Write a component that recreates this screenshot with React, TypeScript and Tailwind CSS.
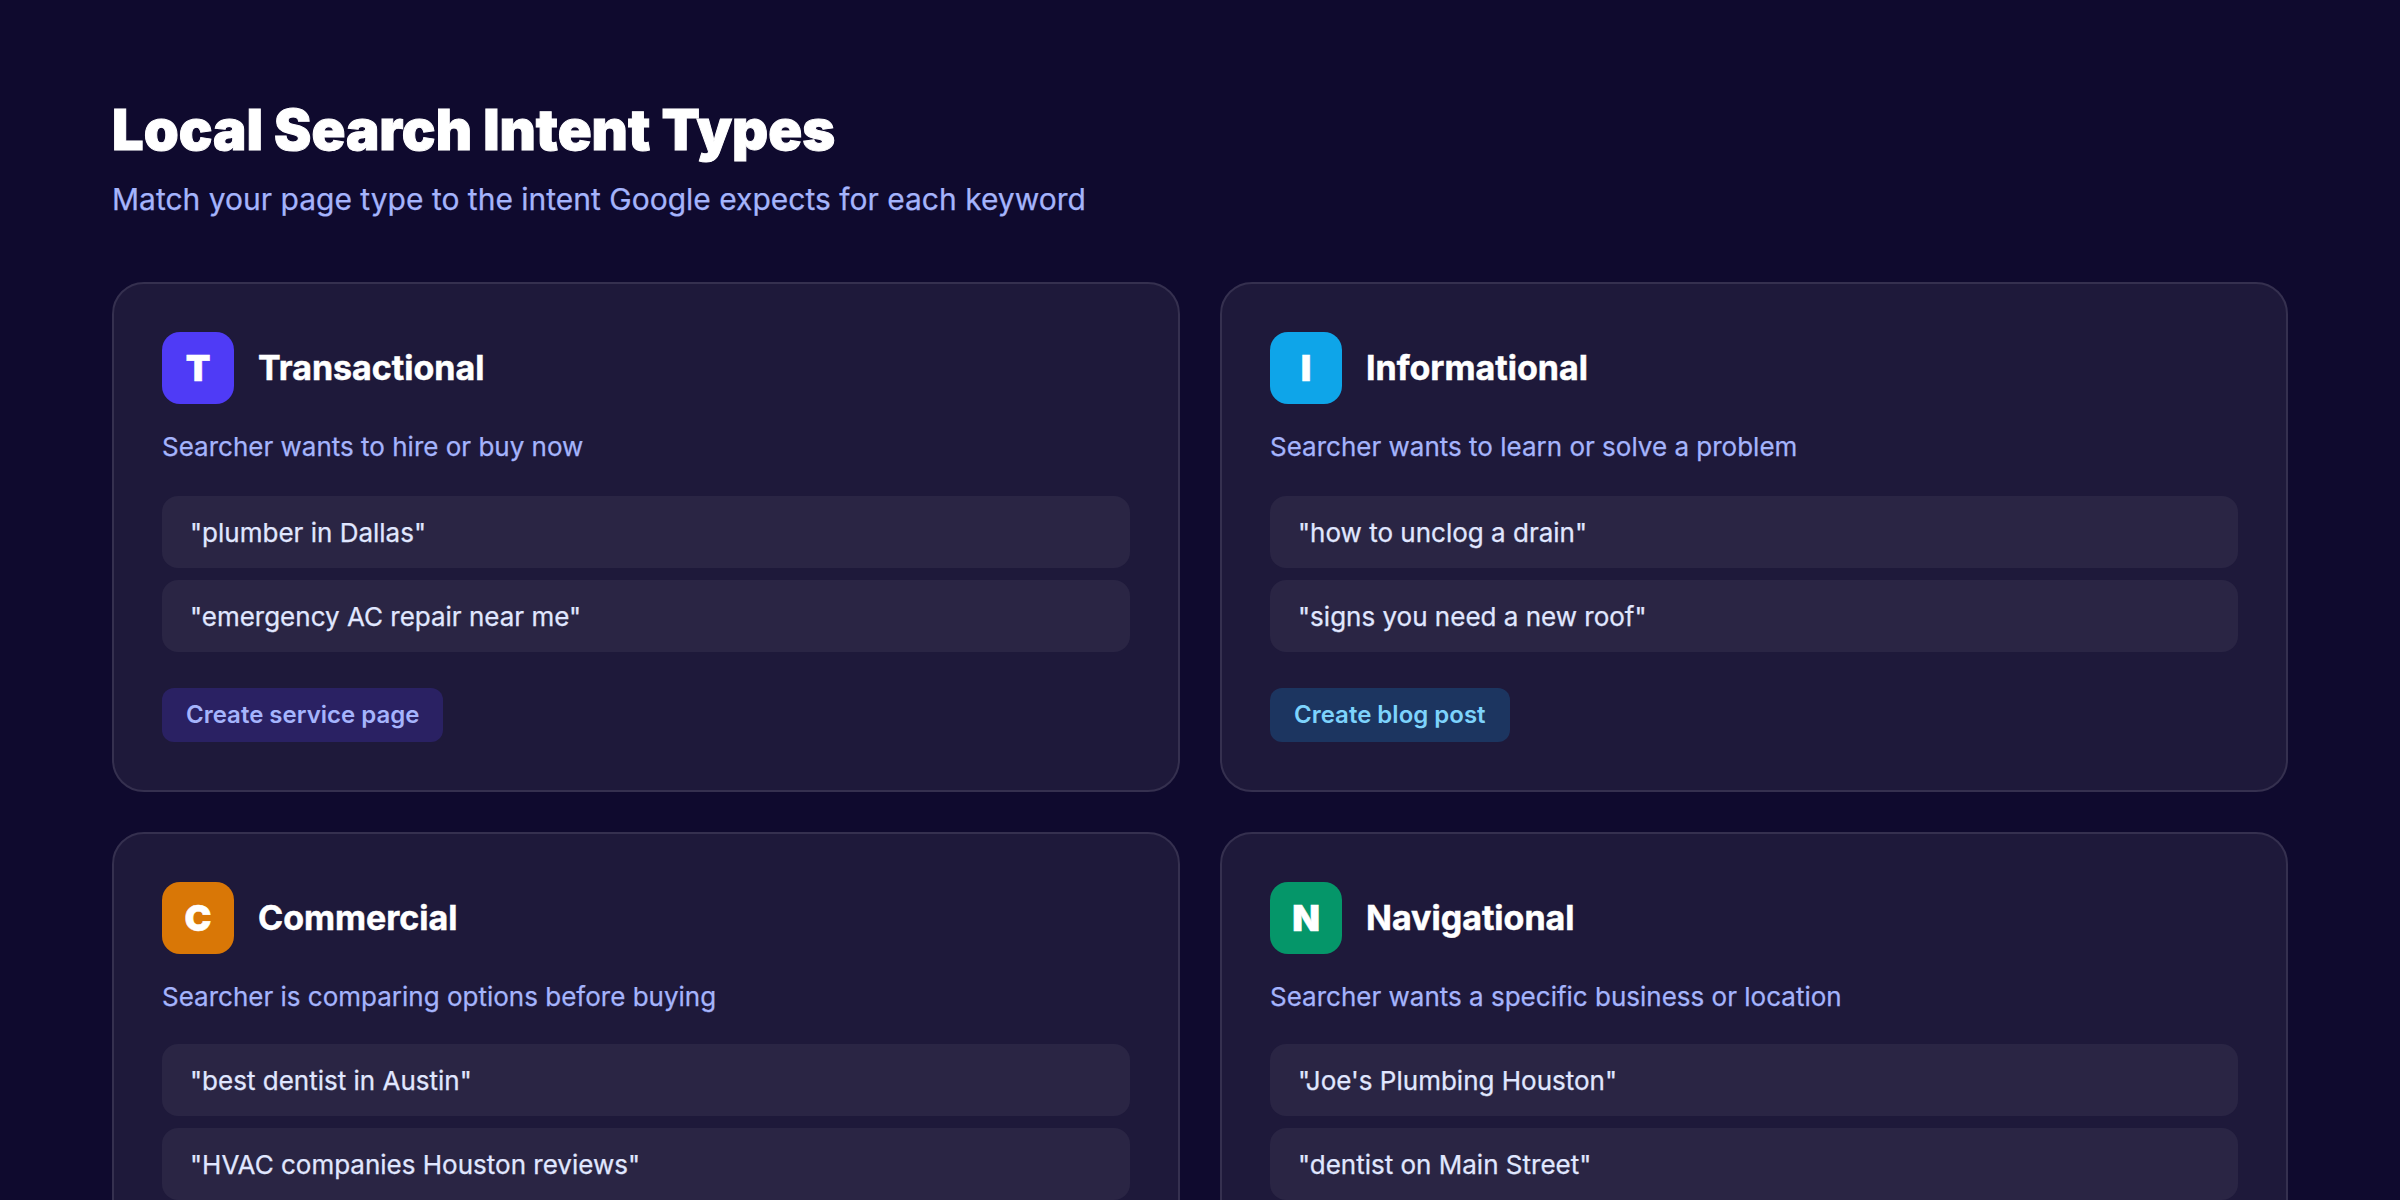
const cards = [
  { letter: "T", title: "Transactional", desc: "Searcher wants to hire or buy now", q: ['"plumber in Dallas"', '"emergency AC repair near me"'], cta: "Create service page", icon: "bg-[#4f3bf6]", btn: "bg-[#2a2163] text-[#a5b4fc]", list: "mt-[33px]" },
  { letter: "I", title: "Informational", desc: "Searcher wants to learn or solve a problem", q: ['"how to unclog a drain"', '"signs you need a new roof"'], cta: "Create blog post", icon: "bg-[#0ea5e9]", btn: "bg-[#1c3560] text-[#7dd3fc]", list: "mt-[33px]" },
  { letter: "C", title: "Commercial", desc: "Searcher is comparing options before buying", q: ['"best dentist in Austin"', '"HVAC companies Houston reviews"'], cta: "", icon: "bg-[#d97706]", btn: "", list: "mt-[31px]" },
  { letter: "N", title: "Navigational", desc: "Searcher wants a specific business or location", q: ['"Joe\'s Plumbing Houston"', '"dentist on Main Street"'], cta: "", icon: "bg-[#059669]", btn: "", list: "mt-[31px]" },
];

export default function App() {
  return (
    <div className="h-[1200px] overflow-hidden bg-[#0f0a2e] px-[112px] pt-[96px] font-['Inter',sans-serif]">
      <h1 className="text-[56px] leading-[68px] font-black text-white [-webkit-text-stroke:1px_white]">Local Search Intent Types</h1>
      <p className="mt-[17px] text-[30px] leading-[36px] text-[#a5b4fc] [-webkit-text-stroke:0.25px_#a5b4fc]">Match your page type to the intent Google expects for each keyword</p>
      <div className="mt-[65px] grid grid-cols-2 gap-[40px]">
        {cards.map((c) => (
          <div key={c.title} className="rounded-[32px] border-2 border-[#35304f] bg-[#1e193a] p-[48px]">
            <div className="flex items-center gap-[24px]">
              <div className={`flex h-[72px] w-[72px] items-center justify-center rounded-[18px] text-[36px] font-black text-white [-webkit-text-stroke:0.5px_white] ${c.icon}`}>{c.letter}</div>
              <div className="text-[34px] leading-[42px] font-bold text-white [-webkit-text-stroke:0.5px_white]">{c.title}</div>
            </div>
            <p className="mt-[27px] text-[26px] leading-[32px] text-[#a5b4fc] [-webkit-text-stroke:0.25px_#a5b4fc]">{c.desc}</p>
            <div className={`flex flex-col gap-[12px] ${c.list}`}>
              {c.q.map((t) => (
                <div key={t} className="flex h-[72px] items-center rounded-[16px] bg-[#2a2544] px-[28px] text-[26px] text-[#e0e7ff] [-webkit-text-stroke:0.25px_#e0e7ff]">{t}</div>
              ))}
            </div>
            {c.cta ? (
              <div className={`mt-[36px] inline-flex h-[54px] items-center rounded-[12px] px-[24px] text-[24px] font-semibold ${c.btn}`}>{c.cta}</div>
            ) : null}
          </div>
        ))}
      </div>
    </div>
  );
}
